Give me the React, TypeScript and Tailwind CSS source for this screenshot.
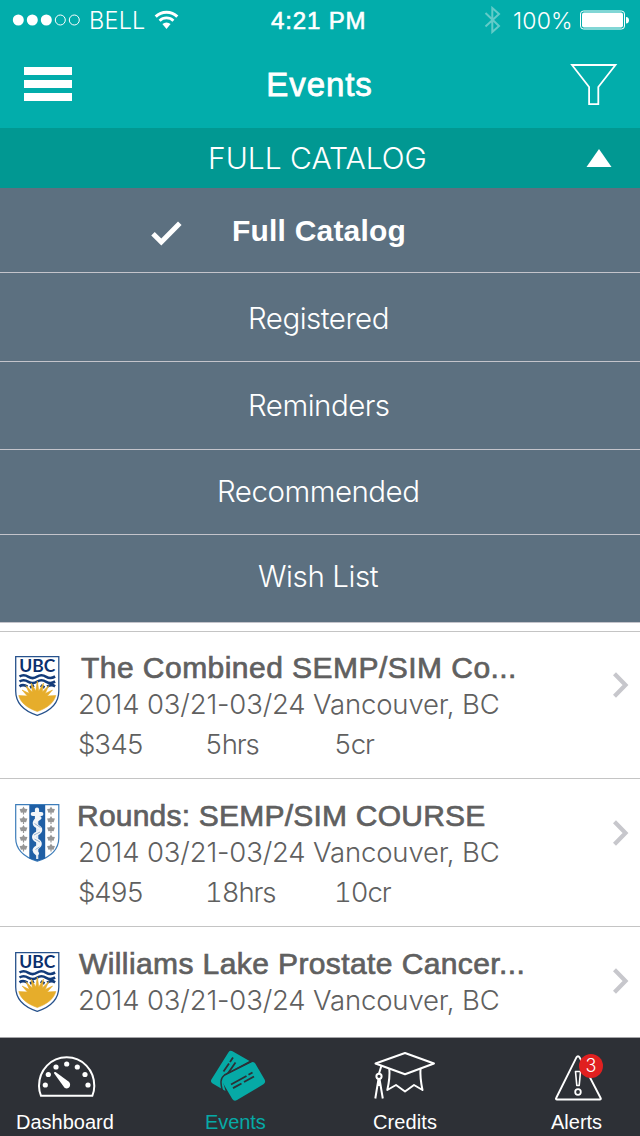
import type { ReactNode } from "react";

const LIGHT = "font-['Inter','Liberation_Sans',sans-serif] font-light";

function StatusBar() {
  return (
    <div className="flex h-[40px] items-center text-white">
      <svg className="ml-[12px] shrink-0" width="70" height="14" viewBox="0 0 70 14">
        <circle cx="6.3" cy="7" r="5.5" fill="#fff" />
        <circle cx="20.3" cy="7" r="5.5" fill="#fff" />
        <circle cx="34.3" cy="7" r="5.5" fill="#fff" />
        <circle cx="48.3" cy="7" r="5" fill="none" stroke="#fff" />
        <circle cx="62.3" cy="7" r="5" fill="none" stroke="#fff" />
      </svg>
      <span className={`${LIGHT} ml-[7px] w-[56px] whitespace-nowrap pt-[2px] text-[23.500px] leading-[40px] tracking-[0.2px]`}>
        BELL
      </span>
      <svg className="ml-[9px] shrink-0" width="26" height="20" viewBox="0 0 26 20">
        <path d="M1.7 6.6a15.5 15.5 0 0 1 21.6 0" fill="none" stroke="#fff" strokeWidth="3" />
        <path d="M5.600 10.700a9.900 9.900 0 0 1 13.800 0" fill="none" stroke="#fff" strokeWidth="2.800" />
        <path d="M8.400 14a6 6 0 0 1 8.200 0l-4.100 5z" fill="#fff" />
      </svg>
      <span className="ml-[91px] w-[110px] whitespace-nowrap pt-[2px] font-['Liberation_Sans',Arial,sans-serif] text-[24px] leading-[40px] tracking-[0.85px] [-webkit-text-stroke:0.6px_white]">
        4:21 PM
      </span>
      <svg className="ml-[103px] shrink-0" width="17" height="28" viewBox="0 0 17 28">
        <path d="M1.5 7l13.5 13L8.3 26V2L15 8 1.5 20.5" fill="none" stroke="#63cbc8" strokeWidth="2" />
      </svg>
      <span className={`${LIGHT} ml-[12px] w-[61px] whitespace-nowrap pt-[2px] text-[23px] leading-[40px] tracking-[0.2px]`}>
        100%
      </span>
      <svg className="ml-[6px] shrink-0" width="50" height="20" viewBox="0 0 50 20">
        <rect x="0.5" y="1" width="44" height="18" rx="3" fill="none" stroke="#fff" />
        <rect x="2" y="2.6" width="41" height="14.8" rx="2" fill="#fff" />
        <path d="M46 7c2.2 0 3 1.4 3 3.2s-.8 3.2-3 3.2z" fill="#fff" />
      </svg>
    </div>
  );
}

function Header() {
  return (
    <header className="h-[128px] shrink-0 bg-[#02adab]">
      <StatusBar />
      <div className="flex h-[88px] items-start justify-between pl-[24px] pr-[22px]">
        <div className="mt-[27px] flex w-[48px] flex-col gap-[5px]">
          <div className="h-[8px] bg-white" />
          <div className="h-[8px] bg-white" />
          <div className="h-[8px] bg-white" />
        </div>
        <h1 className="-ml-[3px] mt-[25px] font-['Liberation_Sans',Arial,sans-serif] text-[33px] leading-[40px] tracking-[0.9px] text-white [-webkit-text-stroke:0.8px_white]">
          Events
        </h1>
        <svg className="mt-[23px]" width="48" height="43" viewBox="0 0 48 43">
          <path d="M2 2h43.500L28.300 24v17.200h-9.200V24z" fill="none" stroke="#fff" strokeWidth="1.800" />
        </svg>
      </div>
    </header>
  );
}

function CatalogBar() {
  return (
    <div className="flex h-[60px] shrink-0 items-center bg-[#019892] text-white">
      <span className={`${LIGHT} flex-1 whitespace-nowrap pl-[208px] text-[30px] leading-[40px]`}>
        FULL CATALOG
      </span>
      <svg className="mr-[28px]" width="26" height="18" viewBox="0 0 26 18">
        <path d="M13 0L25.500 18H.5z" fill="#fff" />
      </svg>
    </div>
  );
}

function MenuRow({ className, children }: { className: string; children: ReactNode }) {
  return (
    <div className={`${LIGHT} whitespace-nowrap border-b border-[#c4c4cb] bg-[#5c7080] text-[29.500px] leading-[40px] text-white ${className}`}>
      {children}
    </div>
  );
}

function FilterMenu() {
  return (
    <div className="shrink-0">
      <div className="flex h-[85px] border-b border-[#c4c4cb] bg-[#5c7080] text-white">
        <svg className="ml-[150px] mt-[32px]" width="34" height="26" viewBox="0 0 34 26">
          <path d="M3 13.800L11.300 22 29.800 3.200" fill="none" stroke="#fff" strokeWidth="5" />
        </svg>
        <span className="ml-[48px] mt-[23px] whitespace-nowrap font-['Liberation_Sans',Arial,sans-serif] text-[30px] font-bold leading-[40px] tracking-[0.2px]">
          Full Catalog
        </span>
      </div>
      <MenuRow className="h-[89px] pl-[248px] pt-[25px] tracking-[-0.5px]">Registered</MenuRow>
      <MenuRow className="h-[88px] pl-[248px] pt-[23px] tracking-[-0.5px]">Reminders</MenuRow>
      <MenuRow className="h-[85px] pl-[217px] pt-[21px] tracking-[-0.5px]">Recommended</MenuRow>
      <MenuRow className="h-[88px] pl-[258px] pt-[21px] tracking-[-0.4px]">Wish List</MenuRow>
    </div>
  );
}

function UbcCrest() {
  return (
    <svg className="overflow-visible" width="45" height="61" viewBox="0 0 45 61">
      <path d="M.7.7h43.100V35C43.800 48 34 55.500 22.250 59.300 10.500 55.500.7 48 .7 35z" fill="#fff" stroke="#27528c" strokeWidth="1.300" />
      <text x="22.300" y="16" textAnchor="middle" textLength="36" lengthAdjust="spacingAndGlyphs" fill="#0b2f6d" fontFamily="Lato, sans-serif" fontWeight="700" fontSize="16.500">
        UBC
      </text>
      <g fill="none" stroke="#123b7a" strokeWidth="2.600">
        <path d="M4.500 20.500c3-2 6-1.500 9 .3s6 1.600 8.800-.3c3-2 6-1.500 9 .3s6 1.300 8.800-.3" />
        <path d="M4.500 25.500c3-2 6-1.500 9 .3s6 1.600 8.800-.3c3-2 6-1.500 9 .3s6 1.300 8.800-.3" />
        <path d="M4.500 30.300c3-2 5-1.500 8 .3M40.100 30.300c-3-2-5-1.500-8 .3M15 31.500l4-2M29.600 31.500l-4-2" />
      </g>
      <path
        d="M22.300 25l1.500 10 4.700-8-1.200 9 6.500-6.500-3.600 8 7.300-3.500-5.300 6 8.600-.5C39 46.500 32.500 52 22.300 55.500 12 52 5.500 46.500 3.800 39.500l8.600.5-5.300-6 7.300 3.500-3.600-8 6.500 6.500-1.200-9 4.700 8z"
        fill="#e6ad2b"
        stroke="#e6ad2b"
        strokeWidth="0.600"
      />
    </svg>
  );
}

function Leaf({ x, y }: { x: number; y: number }) {
  return (
    <path
      transform={`translate(${x} ${y})`}
      d="M0-4l1.300 2.200L3.900-1.600 3.200.6 2.600 2.200.6 2.100V4H-.6V2.100L-2.600 2.200-3.200.6-3.900-1.600-1.300-1.800z"
      fill="#969696"
    />
  );
}

function StaffCrest() {
  const rows = [6.5, 16, 25, 34.5, 43.5];
  return (
    <svg width="45" height="59" viewBox="0 0 45 59">
      <path d="M.7.7h43.100V34C43.800 47 34 53.500 22.250 57.300 10.500 53.500.7 47 .7 34z" fill="#fff" stroke="#3d7dba" strokeWidth="1.200" />
      <path d="M14.300 1h15.900v53.500l-8 2.600-7.900-2.600z" fill="#1f5fa5" />
      {rows.map((y) => (
        <Leaf key={y} x={8.5} y={y} />
      ))}
      {rows.map((y) => (
        <Leaf key={y} x={36} y={y} />
      ))}
      <path d="M22.200 5v50" stroke="#dfe8f2" strokeWidth="2.200" />
      <path
        d="M17.800 10h8.500M22 5.500v9"
        fill="none"
        stroke="#f2f5f8"
        strokeWidth="4.200"
        strokeLinecap="round"
      />
      <path
        d="M24.500 14c-6 3-6 6.500-2 8.500 4 2 3.500 5-.5 7-4 2-4 5 0 7s3.500 5 0 7-3 4 0 6"
        fill="none"
        stroke="#f2f5f8"
        strokeWidth="4"
        strokeLinecap="round"
      />
      <path d="M19.500 19.500l6 4M25 28l-6 3M19.500 35l5.500 3M24.500 43l-4 2.500" stroke="#6f93bb" strokeWidth="0.700" />
    </svg>
  );
}

type EventItem = {
  crest: ReactNode;
  title: string;
  titleClass: string;
  rowClass: string;
  meta?: [string, string, string];
};

const events: EventItem[] = [
  {
    crest: <UbcCrest />,
    title: "The Combined SEMP/SIM Co...",
    titleClass: "ml-[2px] tracking-[0.46px]",
    rowClass: "h-[147px] border-[#c4c4c4]",
    meta: ["$345", "5hrs", "5cr"],
  },
  {
    crest: <StaffCrest />,
    title: "Rounds: SEMP/SIM COURSE",
    titleClass: "-ml-[2px] tracking-[0.22px]",
    rowClass: "h-[148px] border-[#c4c4c4] pt-[1px]",
    meta: ["$495", "18hrs", "10cr"],
  },
  {
    crest: <UbcCrest />,
    title: "Williams Lake Prostate Cancer...",
    titleClass: "tracking-[0.4px]",
    rowClass: "h-[111px] border-[#a5a5a8] pt-[1px]",
  },
];

function EventRow({ crest, title, titleClass, rowClass, meta }: EventItem) {
  return (
    <div className={`flex shrink-0 border-b bg-white text-[#606060] ${rowClass}`}>
      <div className="ml-[15px] mt-[24px] w-[64px] shrink-0">{crest}</div>
      <div className="flex-1 whitespace-nowrap pt-[16px]">
        <div className={`font-['Liberation_Sans',Arial,sans-serif] text-[30px] leading-[40px] [-webkit-text-stroke:0.7px_#606060] ${titleClass}`}>
          {title}
        </div>
        <div className={`${LIGHT} -ml-px -mt-[3px] text-[27.500px] leading-[38px] tracking-[-0.16px]`}>
          2014 03/21-03/24 Vancouver, BC
        </div>
        {meta && (
          <div className={`${LIGHT} -ml-px mt-[2px] flex text-[27.500px] tabular-nums leading-[38px] tracking-[-1.1px]`}>
            <span className="w-[127px] tracking-[-1.500px]">{meta[0]}</span>
            <span className="w-[129px]">{meta[1]}</span>
            <span>{meta[2]}</span>
          </div>
        )}
      </div>
      <svg className="mr-[10px] mt-[40px] shrink-0" width="18" height="26" viewBox="0 0 18 26">
        <path d="M2.500 1.800L13.500 13 2.500 24.200" fill="none" stroke="#c7c7cc" strokeWidth="4.200" />
      </svg>
    </div>
  );
}

function GaugeIcon() {
  return (
    <svg width="58" height="42" viewBox="0 0 58 42">
      <path d="M3 39.800C1.800 37 1 33.500 1 30 1 14 13 1.300 28.700 1.300S56.300 14 56.300 30c0 3.500-.8 7-2 9.800z" fill="none" stroke="#fff" strokeWidth="2" />
      <g fill="#fff">
        <circle cx="7.300" cy="29" r="2.600" />
        <circle cx="10.300" cy="18.500" r="2.600" />
        <circle cx="18" cy="11" r="2.600" />
        <circle cx="28.700" cy="8" r="2.600" />
        <circle cx="39.300" cy="11" r="2.600" />
        <circle cx="47" cy="18.500" r="2.600" />
        <circle cx="50" cy="29" r="2.600" />
        <path d="M16.200 17.500c-.7-1 .3-2 1.300-1.400l13 9.400c3.800 3 .3 8.800-4 6.300z" />
      </g>
    </svg>
  );
}

function CardsIcon() {
  return (
    <svg width="56" height="52" viewBox="0 0 56 52">
      <path d="M17.500 2.200q1.500-2.300 4-1L38.500 11 15 24q-5 3-3 8l2.500 9L1.600 33.500q-2.500-1.500-1.200-4z" fill="#06aaa6" />
      <path d="M12.500 21.500L18 13.500M19 12l3-4.500M16.500 24L24.500 12.500" stroke="#2d3036" strokeWidth="1.800" />
      <path d="M13.500 25.500L39.500 12.700q3.400-1.600 4.900 1L53.600 29.500q1.500 3-1.200 4.800L26 50q-2.900 1.700-4.700-1L11 31.500q-1.600-3.500 2.500-6z" fill="#06aaa6" />
      <path d="M11.300 40.500C9.500 33 9 28.500 13.500 25L40 11.500" fill="none" stroke="#2d3036" strokeWidth="1.500" />
      <path d="M20 34.500l15.500-8.500M37.500 24.800l4-2.300M22 38.200l8.500-4.700M33 32l10-5.500" stroke="#2d3036" strokeWidth="1.900" />
    </svg>
  );
}

function CapIcon() {
  return (
    <svg width="62" height="49" viewBox="0 0 62 49">
      <g fill="none" stroke="#fff" strokeWidth="2" strokeLinejoin="round">
        <path d="M1.500 12.500L31 2l29 10.500L31 23.200z" />
        <path d="M15.300 17.500c.8 8-.5 15-2 21.500l8.700-5 9 6.500 9-6.500 8.500 5c-1.500-7-2.500-14-2-21.500" />
        <path d="M7.500 14.500L5 22.500" />
        <circle cx="5" cy="25.300" r="2.600" />
        <path d="M4.500 28L1.300 47.500M5.500 28l3.300 19.500M4.700 30v5" />
      </g>
    </svg>
  );
}

function AlertIcon() {
  return (
    <svg width="49" height="46" viewBox="0 0 49 46">
      <g fill="none" stroke="#fff" strokeLinejoin="round">
        <path d="M22.300 2.600q1.700-2.800 3.400 0L46.600 43q.8 1.500-.8 1.500H3q-1.600 0-.8-1.500z" strokeWidth="1.900" />
        <path d="M21.500 16.500h5l-1.300 14h-2.400z" strokeWidth="1.600" />
        <circle cx="24" cy="37" r="2.800" strokeWidth="1.800" />
      </g>
    </svg>
  );
}

function Tab({ label, icon, className, iconClass, labelClass }: { label: string; icon: ReactNode; className: string; iconClass: string; labelClass: string }) {
  return (
    <div className={`flex shrink-0 flex-col ${className}`}>
      <div className={`h-[71px] ${iconClass}`}>{icon}</div>
      <span className={`whitespace-nowrap leading-[26px] ${labelClass}`}>{label}</span>
    </div>
  );
}

function TabBar() {
  return (
    <nav className="flex h-[98px] shrink-0 bg-[#2d3036] font-['Liberation_Sans',Arial,sans-serif] text-[20px] text-white">
      <Tab label="Dashboard" icon={<GaugeIcon />} className="w-[170px]" iconClass="pl-[38px] pt-[18px]" labelClass="pl-[16px]" />
      <Tab label="Events" icon={<CardsIcon />} className="w-[170px]" iconClass="pl-[41px] pt-[12px]" labelClass="pl-[35px] tracking-[-0.1px] text-[#06aaa6]" />
      <Tab label="Credits" icon={<CapIcon />} className="w-[170px]" iconClass="pl-[34px] pt-[13px]" labelClass="pl-[33px] tracking-[0.1px]" />
      <Tab
        label="Alerts"
        icon={
          <div className="relative w-[49px]">
            <AlertIcon />
            <span className="absolute -top-[1px] left-[25px] h-[24px] w-[24px] rounded-full bg-[#e02020] text-center font-['Inter','Liberation_Sans',sans-serif] text-[18px] font-light leading-[24px]">
              3
            </span>
          </div>
        }
        className="w-[130px]"
        iconClass="pl-[44px] pt-[17px]"
        labelClass="pl-[41px]"
      />
    </nav>
  );
}

export default function App() {
  return (
    <div className="flex h-[1136px] w-[640px] flex-col overflow-hidden bg-white">
      <Header />
      <CatalogBar />
      <FilterMenu />
      <div className="h-[9px] shrink-0 border-b border-[#c4c4c4] bg-white" />
      <main className="shrink-0">
        {events.map((event) => (
          <EventRow key={event.title} {...event} />
        ))}
      </main>
      <TabBar />
    </div>
  );
}
